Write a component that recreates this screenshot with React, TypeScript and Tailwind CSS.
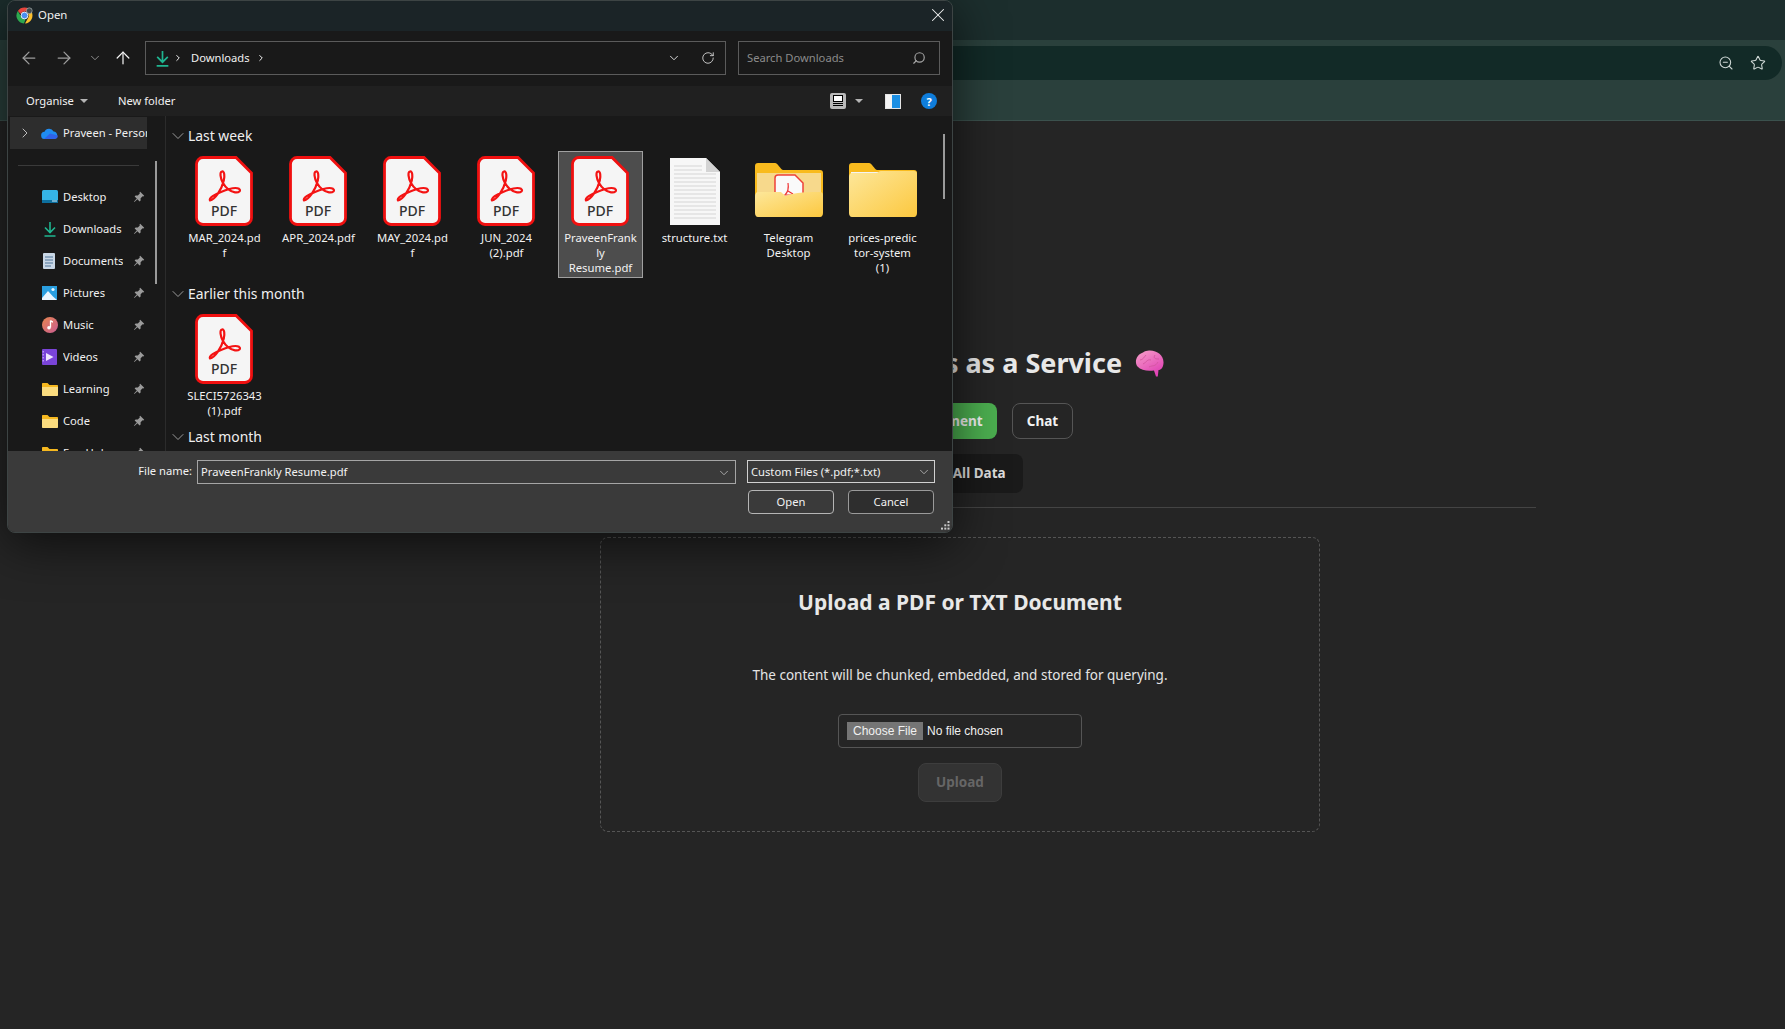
import { ArrowLeft, ArrowRight, ArrowUp, ChevronDown, ChevronRight, RotateCw, Search, Star, X, ZoomOut } from "lucide-react";
import type { ReactNode } from "react";

const SANS = "font-['Noto_Sans','Open_Sans',sans-serif]";

function PdfIcon() {
  return (
    <svg width="58" height="70" viewBox="0 0 58 70" className="block -translate-x-[1px]">
      <path
        d="M8 1.5H41L56.5 17V62A6.5 6.5 0 0 1 50 68.5H8A6.5 6.5 0 0 1 1.5 62V8A6.5 6.5 0 0 1 8 1.5Z"
        fill="#f5f5f5"
        stroke="#f01010"
        strokeWidth="2.8"
      />
      <path
        d="M15 44.5C20 43.5 26.5 34 28.8 24.5C29.8 20 29.5 15 27 15.5C24.5 16 25.3 22 28 27C30.8 32 35 35.5 40 36.3C44 37 46.5 34.5 44 32.8C41 31 33 33 26 36C20 38.5 13.5 41.5 15 44.5Z"
        fill="none"
        stroke="#f41414"
        strokeWidth="2.2"
        strokeLinejoin="round"
      />
      <text x="29" y="60" textAnchor="middle" fontSize="14" fontWeight="500" fill="#333" fontFamily="Noto Sans, sans-serif">
        PDF
      </text>
    </svg>
  );
}

function TextFileIcon() {
  const lines = [8, 12, 16, 20, 24, 28, 32, 36, 40, 44, 48, 52, 56, 60];
  return (
    <svg width="50" height="67" viewBox="0 0 50 67" className="block mt-[2px] mx-auto">
      <path d="M0 0H36L50 14V67H0Z" fill="#f7f7f7" />
      <path d="M36 0V14H50Z" fill="#d4d4d4" />
      {lines.map((y) => (
        <line key={y} x1="4" x2={y < 14 ? 32 : 46} y1={y} y2={y} stroke="#d5d5d5" strokeWidth="1" />
      ))}
    </svg>
  );
}

function FolderIcon({ withPdf }: { withPdf?: boolean }) {
  const id = withPdf ? "folderA" : "folderB";
  return (
    <svg width="68" height="54" viewBox="0 0 68 54" className="block mt-[7px] mx-auto">
      <defs>
        <linearGradient id={id} x1="0" y1="0" x2="1" y2="1">
          <stop offset="0" stopColor="#fde79a" />
          <stop offset="1" stopColor="#fcc83f" />
        </linearGradient>
      </defs>
      <path d="M3 0H20C23 0 25 6 28 7H65C67 7 68 8 68 10V40H0V3C0 1 1 0 3 0Z" fill="#f9bb1e" />
      {withPdf ? (
        <>
          <rect x="2" y="10" width="64" height="34" fill="#f7d98c" />
          <path d="M20 40V15C20 13 21 12 23 12H40L48 20V40Z" fill="#fafafa" stroke="#ee4038" strokeWidth="1.5" />
          <path d="M33 20C34 26 32 30 30 32M33 28L38 31M29 32H37" fill="none" stroke="#ee3030" strokeWidth="1.2" />
          <path d="M2 29H24C27 29 28 32 31 32L24 33ZM0 34C0 31 1 29 3 29H26L30 33C40 29 55 29 65 29C67 29 68 30 68 32V50C68 52 67 54 65 54H3C1 54 0 52 0 50Z" fill={`url(#${id})`} />
        </>
      ) : (
        <>
          <path d="M2 9H30L28 12H2Z" fill="#f4f4f4" />
          <path d="M0 14C0 12 1 10 3 10H27C29 10 30 8 32 8H65C67 8 68 9 68 11V50C68 52 67 54 65 54H3C1 54 0 52 0 50Z" fill={`url(#${id})`} />
        </>
      )}
    </svg>
  );
}

function DownloadArrow({ size = 16 }: { size?: number }) {
  return (
    <svg width={size} height={size} viewBox="0 0 16 16" fill="none" stroke="#1fb590" strokeWidth="1.6" className="shrink-0">
      <path d="M8 1V11M3 6.5L8 11.5L13 6.5M2.5 15H13.5" />
    </svg>
  );
}

function PinIcon() {
  return (
    <svg width="12" height="12" viewBox="0 0 12 12" fill="#9b9b9b">
      <path d="M7.2 0.8L11.2 4.8L10.4 5.5L9.6 5.2L7.6 7.2L7.6 9.4L6.6 10.4L4.4 8.2L1.4 11L1 10.6L3.8 7.6L1.6 5.4L2.6 4.4L4.8 4.4L6.8 2.4L6.5 1.6Z" />
    </svg>
  );
}

function ChromeIcon() {
  return (
    <svg width="17" height="17" viewBox="0 0 32 32" className="shrink-0">
      <path d="M16 1A15 15 0 0 1 29 8.5H16A7.5 7.5 0 0 0 9 13L3.5 7.5A15 15 0 0 1 16 1Z" fill="#e8453c" />
      <path d="M29 8.5A15 15 0 0 1 17 31L23 20A7.5 7.5 0 0 0 22.5 12Z" fill="#fbc02d" />
      <path d="M3.5 7.5L10 19A7.5 7.5 0 0 0 18 23L15 31A15 15 0 0 1 3.5 7.5Z" fill="#2da94f" />
      <circle cx="16" cy="16" r="6.4" fill="#4a90f0" stroke="#fff" strokeWidth="1.6" />
      <circle cx="25" cy="7" r="5.5" fill="#40494c" stroke="#c9d1d1" strokeWidth="1" />
    </svg>
  );
}

function Cloud() {
  return (
    <svg width="17" height="12" viewBox="0 0 17 12">
      <path d="M4 12A3.6 3.6 0 0 1 3.5 4.8A5 5 0 0 1 12.6 4.4A3.9 3.9 0 0 1 13.4 12Z" fill="#1f8cf0" />
      <path d="M3 12H13.5A3.4 3.4 0 0 0 16.8 8.5L9 6.5Z" fill="#2f62e8" />
    </svg>
  );
}

function Brain() {
  return (
    <svg width="29" height="27" viewBox="0 0 29 27" className="shrink-0">
      <defs>
        <linearGradient id="brainFill" x1="0.1" y1="0" x2="0.7" y2="1">
          <stop offset="0" stopColor="#f59cc8" />
          <stop offset="1" stopColor="#e03fb4" />
        </linearGradient>
      </defs>
      <path d="M14 0.5C22 0 29 5.5 28.5 13C28.3 17.5 26 20 23.5 20L22.8 26.5H21L19 20.5C13 21.5 6 20.5 2.5 16.5C-1 12 1.5 4.5 8 2.5C10 1 12 0.6 14 0.5Z" fill="url(#brainFill)" />
      <path d="M8 14C12 12 12 9 16 10M14 17C18 15 20 17 23 12M20 5C18 8 20 9 24 9M5 10C8 10 9 7 11 5" stroke="#d2579f" strokeWidth="0.9" fill="none" />
    </svg>
  );
}

const favourites: { name: string; icon: ReactNode }[] = [
  {
    name: "Desktop",
    icon: (
      <svg width="16" height="14" viewBox="0 0 16 14">
        <rect width="16" height="12.5" rx="1.5" fill="#35b4e6" />
        <rect y="10" width="16" height="3" fill="#0d6f9e" />
        <rect x="10" y="10.5" width="5" height="1" fill="#cfefff" />
      </svg>
    ),
  },
  { name: "Downloads", icon: <DownloadArrow /> },
  {
    name: "Documents",
    icon: (
      <svg width="14" height="16" viewBox="0 0 14 16">
        <rect x="1" width="12" height="16" rx="1" fill="#c9d7e6" />
        <path d="M3 4H11M3 7H11M3 10H11M3 13H9" stroke="#4f7599" strokeWidth="1" />
      </svg>
    ),
  },
  {
    name: "Pictures",
    icon: (
      <svg width="15" height="14" viewBox="0 0 15 14">
        <rect width="15" height="14" fill="#2a9fe0" />
        <circle cx="11" cy="3.5" r="1.6" fill="#e9f7ff" />
        <path d="M0 14V12L6 5L11 10.5L15 14Z" fill="#eaf6ff" />
      </svg>
    ),
  },
  {
    name: "Music",
    icon: (
      <svg width="16" height="16" viewBox="0 0 16 16">
        <defs>
          <linearGradient id="musicFill" x1="0" y1="0" x2="1" y2="1">
            <stop offset="0" stopColor="#e8864f" />
            <stop offset="1" stopColor="#c85c92" />
          </linearGradient>
        </defs>
        <circle cx="8" cy="8" r="8" fill="url(#musicFill)" />
        <path d="M8.5 3.5V10.5M8.5 3.5C9.5 4.5 10.5 5 11 5" stroke="#fff" strokeWidth="1.3" fill="none" />
        <circle cx="7" cy="10.8" r="1.8" fill="#fff" />
      </svg>
    ),
  },
  {
    name: "Videos",
    icon: (
      <svg width="15" height="16" viewBox="0 0 15 16">
        <rect width="15" height="16" rx="1" fill="#7a44d8" />
        <path d="M4 4L11.5 8L4 12Z" fill="#efe4ff" />
        <path d="M1.2 2V14" stroke="#c9a8ff" strokeWidth="1.2" strokeDasharray="1.5 1.5" />
      </svg>
    ),
  },
  { name: "Learning", icon: <SmallFolder /> },
  { name: "Code", icon: <SmallFolder /> },
  { name: "Fun Hub", icon: <SmallFolder /> },
];

function SmallFolder() {
  return (
    <svg width="16" height="13" viewBox="0 0 16 13">
      <path d="M0 1C0 .4.4 0 1 0H5.5L7.5 2H15C15.6 2 16 2.4 16 3V6H0Z" fill="#f6b81f" />
      <path d="M0 4H16V12C16 12.6 15.6 13 15 13H1C.4 13 0 12.6 0 12Z" fill="#fbdc7f" />
    </svg>
  );
}

type FileItem = { lines: string[]; icon: ReactNode; selected?: boolean };

const lastWeek: FileItem[] = [
  { lines: ["MAR_2024.pd", "f"], icon: <PdfIcon /> },
  { lines: ["APR_2024.pdf"], icon: <PdfIcon /> },
  { lines: ["MAY_2024.pd", "f"], icon: <PdfIcon /> },
  { lines: ["JUN_2024", "(2).pdf"], icon: <PdfIcon /> },
  { lines: ["PraveenFrank", "ly", "Resume.pdf"], icon: <PdfIcon />, selected: true },
  { lines: ["structure.txt"], icon: <TextFileIcon /> },
  { lines: ["Telegram", "Desktop"], icon: <FolderIcon withPdf /> },
  { lines: ["prices-predic", "tor-system", "(1)"], icon: <FolderIcon /> },
];

function FileTile({ item }: { item: FileItem }) {
  return (
    <div
      className={`w-[85px] pt-[5px] pb-[2px] flex flex-col items-center border ${
        item.selected ? "bg-[#4d4d4d] border-[#a0a0a0]" : "border-transparent"
      }`}
    >
      <div className="h-[70px] -mt-[1px]">{item.icon}</div>
      <div className="mt-[4px] text-center text-[11.3px] leading-[15px] text-[#f2f2f2] whitespace-nowrap">
        {item.lines.map((l) => (
          <div key={l}>{l}</div>
        ))}
      </div>
    </div>
  );
}

function GroupHeader({ label }: { label: string }) {
  return (
    <div className="h-[20px] flex items-center pl-[2px] text-[13.9px] text-[#f0f0f0]">
      <ChevronDown size={20} strokeWidth={1.1} className="text-[#a5a5a5]" />
      <span>{label}</span>
    </div>
  );
}

function FileDialog() {
  return (
    <div className={`absolute left-[7px] top-0 w-[946px] h-[533px] rounded-lg overflow-hidden border border-[#3d4444] shadow-[0_10px_50px_rgba(0,0,0,0.65)] flex flex-col ${SANS}`}>
      {/* Title bar */}
      <div className="h-[30px] shrink-0 bg-[#1b2427] flex items-center pl-[8px] pr-[3px] pb-[2px]">
        <ChromeIcon />
        <span className="ml-[5px] text-[11.4px] text-[#f0f0f0]">Open</span>
        <X size={22} strokeWidth={1.1} className="ml-auto text-[#f2f2f2]" />
      </div>

      {/* Address row */}
      <div className="h-[55px] shrink-0 bg-[#191919] flex items-start pt-[10px] pl-[11px] pr-[12px]">
        <div className="h-[34px] flex items-center">
          <ArrowLeft size={20} strokeWidth={1.5} className="text-[#9c9c9c]" />
          <ArrowRight size={20} strokeWidth={1.5} className="ml-[15px] text-[#9c9c9c]" />
          <ChevronDown size={14} strokeWidth={1.5} className="ml-[14px] text-[#9c9c9c]" />
          <ArrowUp size={20} strokeWidth={1.5} className="ml-[11px] text-[#f0f0f0]" />
        </div>
        <div className="ml-[12px] w-[581px] h-[34px] border border-[#5b5b5b] flex items-center pl-[8px] pr-[10px] text-[11.2px] text-[#f0f0f0]">
          <DownloadArrow size={17} />
          <ChevronRight size={10} strokeWidth={2.4} className="ml-[2px]" />
          <span className="ml-[8px]">Downloads</span>
          <ChevronRight size={10} strokeWidth={2.4} className="ml-[6px]" />
          <ChevronDown size={14} strokeWidth={1.5} className="ml-auto mr-[20px]" />
          <RotateCw size={14} strokeWidth={1.5} className="text-[#d8d8d8]" />
        </div>
        <div className="ml-[12px] w-[202px] h-[34px] border border-[#5b5b5b] flex items-center pl-[8px] pr-[13px] text-[11.2px] text-[#8b8b8b]">
          <span>Search Downloads</span>
          <Search size={14} strokeWidth={2} className="ml-auto scale-x-[-1] text-[#a5a5a5]" />
        </div>
      </div>

      {/* Command bar */}
      <div className="h-[30px] shrink-0 bg-[#202020] flex items-center pl-[18px] pr-[15px] text-[11.2px] text-[#f0f0f0]">
        <span>Organise</span>
        <span className="ml-[6px] w-0 h-0 border-x-[4px] border-x-transparent border-t-[4px] border-t-[#b5b5b5]" />
        <span className="ml-[30px]">New folder</span>
        <div className="ml-auto w-[16px] h-[16px] rounded-[2px] bg-[#b9b9b9] flex flex-col items-center pt-[2px] gap-[1px]">
          <span className="w-[10px] h-[7px] bg-white border border-black" />
          <span className="w-[10px] h-[1px] bg-black" />
          <span className="w-[10px] h-[1px] bg-black" />
        </div>
        <span className="ml-[9px] w-0 h-0 border-x-[4px] border-x-transparent border-t-[4px] border-t-[#b5b5b5]" />
        <div className="ml-[22px] w-[16px] h-[15px] border border-[#e5e5e5] flex">
          <span className="w-[6px] bg-[#f4f4f4]" />
          <span className="flex-1 bg-[#1c8fe3]" />
        </div>
        <div className="ml-[20px] w-[16px] h-[16px] rounded-full bg-[#0f7ddb] flex items-center justify-center text-[11px] leading-none font-bold text-white">
          ?
        </div>
      </div>

      {/* Body */}
      <div className="h-[335px] shrink-0 bg-[#191919] flex overflow-hidden">
        <div className="relative w-[158px] shrink-0 border-r border-[#2b2b2b] pt-[1px] pl-[2px] text-[11.2px] text-[#f0f0f0] overflow-hidden">
          <div className="w-[137px] h-[32px] bg-[#2d2d2d] flex items-center pl-[7px] overflow-hidden whitespace-nowrap">
            <ChevronRight size={16} strokeWidth={1.5} className="shrink-0 text-[#bdbdbd]" />
            <span className="ml-[8px] shrink-0 flex">
              <Cloud />
            </span>
            <span className="ml-[5px]">Praveen - Personal</span>
          </div>
          <div className="mt-[16px] ml-[8px] w-[121px] h-px bg-[#3a3a3a]" />
          <div className="mt-[15px]">
            {favourites.map((f) => (
              <div key={f.name} className="w-[137px] h-[32px] flex items-center pl-[32px] pr-[2px]">
                <span className="w-[21px] shrink-0 flex">{f.icon}</span>
                <span className="truncate">{f.name}</span>
                <span className="ml-auto flex">
                  <PinIcon />
                </span>
              </div>
            ))}
          </div>
          <div className="absolute left-[147px] top-[45px] w-[2px] h-[123px] bg-[#9a9a9a]" />
        </div>

        <div className="relative flex-1 pt-[10px] overflow-hidden">
          <GroupHeader label="Last week" />
          <div className="mt-[5px] ml-[16px] flex gap-[9px]">
            {lastWeek.map((item) => (
              <FileTile key={item.lines[0]} item={item} />
            ))}
          </div>
          <div className="mt-[6px]">
            <GroupHeader label="Earlier this month" />
          </div>
          <div className="mt-[5px] ml-[16px] flex gap-[9px]">
            <FileTile item={{ lines: ["SLECI5726343", "(1).pdf"], icon: <PdfIcon /> }} />
          </div>
          <div className="mt-[6px]">
            <GroupHeader label="Last month" />
          </div>
          <div className="absolute right-[7px] top-[18px] w-[2px] h-[65px] bg-[#9a9a9a]" />
        </div>
      </div>

      {/* Footer */}
      <div className="relative flex-1 bg-[#3a3a3a] pt-[9px] pl-[113px] pr-[16px] text-[11.2px] text-[#f2f2f2]">
        <div className="flex items-start">
          <span className="w-[71px] h-[23px] flex items-center justify-end whitespace-nowrap">File name:</span>
          <div className="ml-[5px] w-[539px] h-[24px] border border-[#a5a5a5] flex items-center pl-[3px] pr-[4px] pt-[1px]">
            <span>PraveenFrankly Resume.pdf</span>
            <ChevronDown size={14} strokeWidth={1.3} className="ml-auto text-[#c8c8c8]" />
          </div>
          <div className="ml-[11px] w-[188px] h-[23px] border border-[#d0d0d0] flex items-center pl-[3px] pr-[3px] pt-[1px] whitespace-nowrap">
            <span>Custom Files (*.pdf;*.txt)</span>
            <ChevronDown size={14} strokeWidth={1.3} className="ml-auto text-[#c8c8c8]" />
          </div>
        </div>
        <div className="mt-[6px] flex justify-end gap-[14px] pr-[2px]">
          <button className="w-[86px] h-[24px] rounded-[4px] bg-[#3a3a3a] border border-[#b5b5b5] text-[11.2px] text-[#f2f2f2]">Open</button>
          <button className="w-[86px] h-[24px] rounded-[4px] bg-[#2e2e2e] border border-[#9a9a9a] text-[11.2px] text-[#f2f2f2]">Cancel</button>
        </div>
        <svg width="9" height="9" viewBox="0 0 9 9" fill="#c9c9c9" className="absolute right-[2px] bottom-[2px]">
          <rect x="6.5" y="0" width="2" height="2" />
          <rect x="3.3" y="3.3" width="2" height="2" />
          <rect x="6.5" y="3.3" width="2" height="2" />
          <rect x="0" y="6.6" width="2" height="2" />
          <rect x="3.3" y="6.6" width="2" height="2" />
          <rect x="6.5" y="6.6" width="2" height="2" />
        </svg>
      </div>
    </div>
  );
}

export default function App() {
  return (
    <div className={`relative h-[1029px] overflow-hidden bg-[#252525] ${SANS}`}>
      {/* Browser window behind the dialog */}
      <div className="h-[40px] bg-[#1c2e2d]" />
      <div className="h-[81px] bg-[#2a403c] border-b border-[#3b514d] pt-[6px] pl-[10px] pr-[3px]">
        <div className="h-[34px] rounded-full bg-[#122a27] flex items-center justify-end pr-[16px] gap-[16px] text-[#cfd8d6]">
          <ZoomOut size={16} strokeWidth={1.6} />
          <Star size={16} strokeWidth={1.6} />
        </div>
      </div>

      <main className="w-[1152px] ml-[384px] pt-[224px] flex flex-col items-center">
        <h1 className="w-[408px] h-[36px] flex items-center justify-end gap-[13px] text-[27px] font-bold text-[#e8e8e8] whitespace-nowrap">
          <span>AI RAG Agents as a Service</span>
          <Brain />
        </h1>
        <div className="mt-[22px] flex gap-[15px] text-[13.5px] font-bold">
          <button className="w-[150px] h-[36px] rounded-lg bg-[#4caf50] text-[#f2f2f2]">Upload Document</button>
          <button className="w-[61px] h-[36px] rounded-lg border border-[#555] text-[#f2f2f2]">Chat</button>
        </div>
        <button className="mt-[15px] w-[126px] h-[39px] rounded-lg bg-[#1a1a1a] text-[13.5px] font-bold text-[#dedede]">Clear All Data</button>
        <div className="mt-[14px] w-full h-px bg-[#444]" />

        <section className="mt-[29px] w-[720px] h-[295px] border border-dashed border-[#555] rounded-lg flex flex-col items-center">
          <h2 className="mt-[50px] h-[30px] flex items-center text-[21px] font-bold text-[#e8e8e8]">Upload a PDF or TXT Document</h2>
          <p className="mt-[45px] h-[24px] flex items-center text-[13.5px] text-[#e4e4e4]">The content will be chunked, embedded, and stored for querying.</p>
          <div className="mt-[27px] w-[244px] h-[34px] border border-[#555] rounded-[4px] flex items-center pl-[8px] font-['Liberation_Sans',sans-serif] text-[12px] text-[#f0f0f0]">
            <span className="w-[76px] h-[18px] bg-[#757575] flex items-center justify-center">Choose File</span>
            <span className="ml-[4px]">No file chosen</span>
          </div>
          <button disabled className="mt-[15px] w-[84px] h-[39px] rounded-lg bg-[#333] border border-[#3d3d3d] text-[13.5px] font-bold text-[#666]">
            Upload
          </button>
        </section>
      </main>

      <FileDialog />
    </div>
  );
}
